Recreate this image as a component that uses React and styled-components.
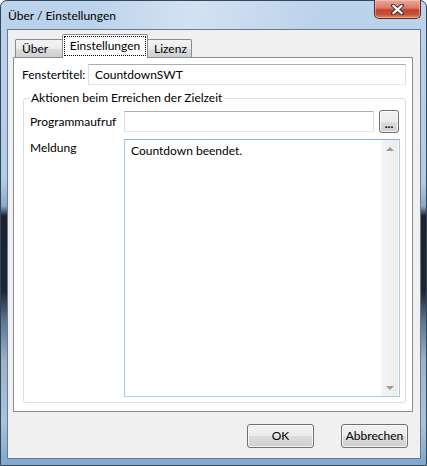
import styled, { createGlobalStyle } from 'styled-components';

const GlobalStyle = createGlobalStyle`
  html, body {
    margin: 0;
    padding: 0;
    background: #ffffff;
  }
  body {
    font-family: "Segoe UI", Lato, "Noto Sans", sans-serif;
    font-size: 12px;
    color: #000;
  }
  * {
    box-sizing: border-box;
  }
`;

const Window = styled.div`
  width: 427px;
  height: 466px;
  border: 1px solid #34465a;
  border-radius: 7px 7px 0 0;
  padding: 0 5px 6px 6px;
  display: flex;
  flex-direction: column;
  background:
    linear-gradient(100deg, rgba(255, 255, 255, 0) 20%, rgba(255, 255, 255, 0.35) 45%, rgba(255, 255, 255, 0) 75%) top / 100% 29px no-repeat,
    linear-gradient(
      180deg,
      #bcd3ec 0px,
      #b2cbe7 180px,
      #8aa9c9 205px,
      #1b222d 215px,
      #1d2631 290px,
      #5b7691 320px,
      #9ab3cb 360px,
      #a9c3dc 420px,
      #7ea6cc 466px
    );
`;

const TitleBar = styled.div`
  height: 28px;
  display: flex;
  justify-content: space-between;
  align-items: flex-start;
`;

const TitleText = styled.div`
  margin-top: 2px;
  padding-left: 1px;
  line-height: 26px;
  color: #000;
`;

const CloseButton = styled.div`
  margin-top: -1px;
  width: 47px;
  height: 19px;
  border: 1px solid #5a2a22;
  border-top: none;
  border-radius: 0 0 5px 5px;
  display: flex;
  align-items: center;
  justify-content: center;
  background:
    linear-gradient(180deg, #e9a99a 0%, #d97a66 45%, #c2412b 55%, #c65138 80%, #e08a6d 100%);
  box-shadow: inset 0 0 0 1px rgba(255, 220, 210, 0.45);
`;

const Client = styled.div`
  flex: 1;
  border: 1px solid #6b7a8b;
  background: #f0f0f0;
  display: flex;
  flex-direction: column;
  padding: 4px 7px 10px 5px;
`;

const TabStrip = styled.div`
  height: 23px;
  display: flex;
  align-items: flex-end;
  padding-left: 2px;
`;

const Tab = styled.div`
  position: relative;
  width: ${(p) => p.$w}px;
  height: ${(p) => (p.$active ? 24 : 18)}px;
  margin-left: ${(p) => (p.$first ? 0 : -1)}px;
  margin-bottom: ${(p) => (p.$active ? -1 : 0)}px;
  z-index: ${(p) => (p.$active ? 2 : 1)};
  border: 1px solid #898c95;
  border-bottom: none;
  border-radius: 2px 2px 0 0;
  background: ${(p) =>
    p.$active ? '#ffffff' : 'linear-gradient(180deg, #f3f3f3 0%, #ebebeb 50%, #dddddd 51%, #cfcfcf 100%)'};
  display: flex;
  align-items: ${(p) => (p.$active ? 'flex-start' : 'center')};
  justify-content: ${(p) => (p.$active ? 'center' : 'flex-start')};
  padding: ${(p) => (p.$active ? '1px 0 0 0' : '1px 0 0 6px')};
  line-height: 16px;
`;

const FocusLabel = styled.span`
  display: block;
  width: 82px;
  height: 20px;
  border: 1px dotted #000;
  text-align: center;
  line-height: 18px;
`;

const Panel = styled.div`
  flex: 1;
  border: 1px solid #898c95;
  background: #ffffff;
  display: flex;
  flex-direction: column;
  padding: 6px 6px 8px 8px;
`;

const FieldRow = styled.div`
  display: flex;
  align-items: center;
`;

const Label = styled.div`
  width: ${(p) => p.$w}px;
  flex-shrink: 0;
  line-height: 16px;
`;

const TextField = styled.div`
  flex: 1;
  height: 21px;
  border: 1px solid #dbdfe6;
  border-top-color: #abadb3;
  border-bottom-color: #e3e9ef;
  background: #fff;
  padding: 0 0 0 6px;
  line-height: 19px;
`;

const GroupBox = styled.fieldset`
  flex: 1;
  margin: 5px 0 0 1px;
  min-width: 0;
  border: 1px solid #d5dfe5;
  border-radius: 3px;
  padding: 4px 6px 5px 6px;
  display: flex;
  flex-direction: column;
`;

const GroupTitle = styled.legend`
  padding: 0 1px;
  margin-left: 0;
  line-height: 16px;
`;

const ProgramRow = styled.div`
  display: flex;
  align-items: center;
  height: 23px;
`;

const SmallButton = styled.div`
  width: 20px;
  height: 23px;
  margin-left: 5px;
  border: 1px solid #6f6f6f;
  border-radius: 3px;
  background: linear-gradient(180deg, #f2f2f2 0%, #ebebeb 50%, #dddddd 51%, #cfcfcf 100%);
  box-shadow: inset 0 0 0 1px rgba(255, 255, 255, 0.75);
  display: flex;
  align-items: flex-end;
  justify-content: center;
  font-size: 12px;
  font-weight: 700;
  line-height: 16px;
  letter-spacing: 0;
`;

const MessageRow = styled.div`
  flex: 1;
  display: flex;
  margin-top: 6px;
  margin-right: -1px;
`;

const MessageLabel = styled(Label)`
  margin-top: 1px;
`;

const TextArea = styled.div`
  flex: 1;
  display: flex;
  border: 1px solid #a9cbe6;
  border-top-color: #86b2dc;
  background: #fff;
`;

const TextAreaText = styled.div`
  flex: 1;
  padding: 3px 0 0 6px;
  line-height: 16px;
`;

const ScrollBar = styled.div`
  width: 17px;
  margin-right: 1px;
  background: linear-gradient(90deg, #f4f4f4 0%, #ececec 100%);
  border-left: 1px solid #f8f8f8;
  display: flex;
  flex-direction: column;
  justify-content: space-between;
  align-items: center;
  padding: 7px 0 6px;
`;

const Arrow = styled.div`
  width: 0;
  height: 0;
  border-left: 4px solid transparent;
  border-right: 4px solid transparent;
  ${(p) => (p.$down ? 'border-top: 4px solid #9a9a9a;' : 'border-bottom: 4px solid #9a9a9a;')}
`;

const ButtonRow = styled.div`
  display: flex;
  justify-content: flex-end;
  gap: 27px;
  margin-top: 12px;
  padding-right: 5px;
`;

const PushButton = styled.div`
  width: 67px;
  height: 24px;
  border: 1px solid #707070;
  border-radius: 3px;
  background: linear-gradient(180deg, #f2f2f2 0%, #ebebeb 50%, #dddddd 51%, #cfcfcf 100%);
  box-shadow: inset 0 0 0 1px rgba(255, 255, 255, 0.75);
  display: flex;
  align-items: center;
  justify-content: center;
  line-height: 16px;
`;

const CloseGlyph = () => (
  <svg width="13" height="11" viewBox="0 0 13 11">
    <path d="M2 1.5 L11 9.5 M11 1.5 L2 9.5" stroke="#3b3b3b" strokeWidth="4" strokeLinecap="square" />
    <path d="M2.5 2 L10.5 9 M10.5 2 L2.5 9" stroke="#ffffff" strokeWidth="2.2" strokeLinecap="square" />
  </svg>
);

export default function App() {
  return (
    <>
      <GlobalStyle />
      <Window>
        <TitleBar>
          <TitleText>Über / Einstellungen</TitleText>
          <CloseButton>
            <CloseGlyph />
          </CloseButton>
        </TitleBar>
        <Client>
          <TabStrip>
            <Tab $first $w={48}>Über</Tab>
            <Tab $active $w={86}>
              <FocusLabel>Einstellungen</FocusLabel>
            </Tab>
            <Tab $w={45}>Lizenz</Tab>
          </TabStrip>
          <Panel>
            <FieldRow>
              <Label $w={66}>Fenstertitel:</Label>
              <TextField>CountdownSWT</TextField>
            </FieldRow>
            <GroupBox>
              <GroupTitle>Aktionen beim Erreichen der Zielzeit</GroupTitle>
              <ProgramRow>
                <Label $w={94}>Programmaufruf</Label>
                <TextField />
                <SmallButton>...</SmallButton>
              </ProgramRow>
              <MessageRow>
                <MessageLabel $w={94}>Meldung</MessageLabel>
                <TextArea>
                  <TextAreaText>Countdown beendet.</TextAreaText>
                  <ScrollBar>
                    <Arrow />
                    <Arrow $down />
                  </ScrollBar>
                </TextArea>
              </MessageRow>
            </GroupBox>
          </Panel>
          <ButtonRow>
            <PushButton>OK</PushButton>
            <PushButton>Abbrechen</PushButton>
          </ButtonRow>
        </Client>
      </Window>
    </>
  );
}
